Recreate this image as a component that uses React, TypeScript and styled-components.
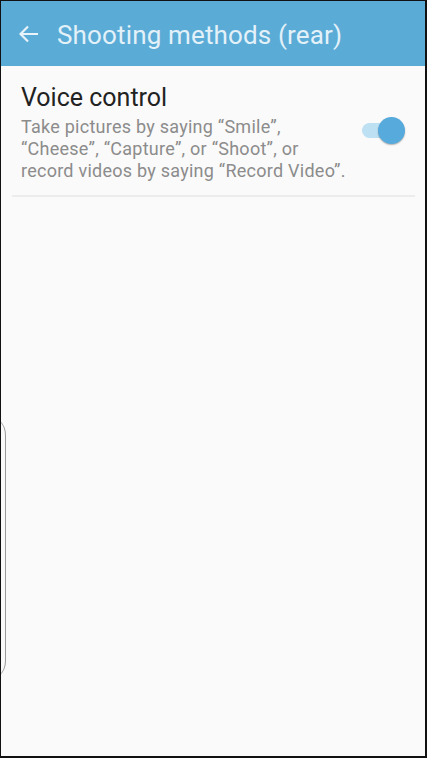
import React from "react";
import styled, { createGlobalStyle } from "styled-components";

const Global = createGlobalStyle`
  html, body { margin: 0; padding: 0; background: #000; }
  body { font-family: Roboto, "Noto Sans", sans-serif; }
`;

const Frame = styled.div`
  width: 427px;
  height: 758px;
  box-sizing: border-box;
  border-style: solid;
  border-color: #111;
  border-width: 1px 2px 2px 1px;
  background: #fafafa;
  display: flex;
  flex-direction: column;
  position: relative;
  overflow: hidden;
`;

const AppBar = styled.header`
  height: 65px;
  background: #5aabd6;
  display: flex;
  align-items: center;
  padding-left: 17px;
  gap: 17px;
  flex-shrink: 0;
`;

const BackButton = styled.div`
  width: 22px;
  height: 22px;
  display: flex;
  align-items: center;
  justify-content: center;
  margin-top: 1px;
`;

const Title = styled.h1`
  margin: 3px 0 0 0;
  font-family: Roboto, sans-serif;
  font-weight: 400;
  font-size: 26px;
  color: #e3f1f9;
  letter-spacing: 0.15px;
`;

const Row = styled.div`
  display: flex;
  align-items: flex-start;
  margin: 0 10px 0 11px;
  padding: 17px 0 13px 9px;
  border-bottom: 2px solid #ececec;
`;

const TextCol = styled.div`
  flex: 1;
  display: flex;
  flex-direction: column;
`;

const Heading = styled.div`
  font-size: 25px;
  line-height: 30px;
  color: #222;
`;

const Desc = styled.div`
  font-size: 18px;
  line-height: 22px;
  color: #8c8c8c;
  margin-top: 3px;
  letter-spacing: 0.25px;
`;

const Switch = styled.div`
  position: relative;
  width: 46px;
  height: 30px;
  margin: 32px 9px 0 0;
  flex-shrink: 0;
`;

const Track = styled.div`
  position: absolute;
  left: 2px;
  top: 8px;
  width: 34px;
  height: 15px;
  border-radius: 8px;
  background: #bde0f2;
`;

const Thumb = styled.div`
  position: absolute;
  left: 18px;
  top: 2px;
  width: 27px;
  height: 27px;
  border-radius: 50%;
  background: #56aadc;
  box-shadow: 0 1px 1.5px rgba(0, 0, 0, 0.3);
`;

const EdgeCurve = styled.div`
  position: absolute;
  left: -30px;
  top: 414px;
  width: 34px;
  height: 266px;
  border-right: 1px solid #9a9a9a;
  border-radius: 0 20px 20px 0;
`;

export default function App() {
  return (
    <>
      <Global />
      <Frame>
        <AppBar>
          <BackButton>
            <svg width="20" height="18" viewBox="0 0 20 18" fill="none">
              <path d="M19 9H2M9 1.5L1.5 9 9 16.5" stroke="#e8f3fa" strokeWidth="2.2" />
            </svg>
          </BackButton>
          <Title>Shooting methods (rear)</Title>
        </AppBar>
        <Row>
          <TextCol>
            <Heading>Voice control</Heading>
            <Desc>
              Take pictures by saying “Smile”,
              <br />
              “Cheese”, “Capture”, or “Shoot”, or
              <br />
              record videos by saying “Record Video”.
            </Desc>
          </TextCol>
          <Switch>
            <Track />
            <Thumb />
          </Switch>
        </Row>
        <EdgeCurve />
      </Frame>
    </>
  );
}
